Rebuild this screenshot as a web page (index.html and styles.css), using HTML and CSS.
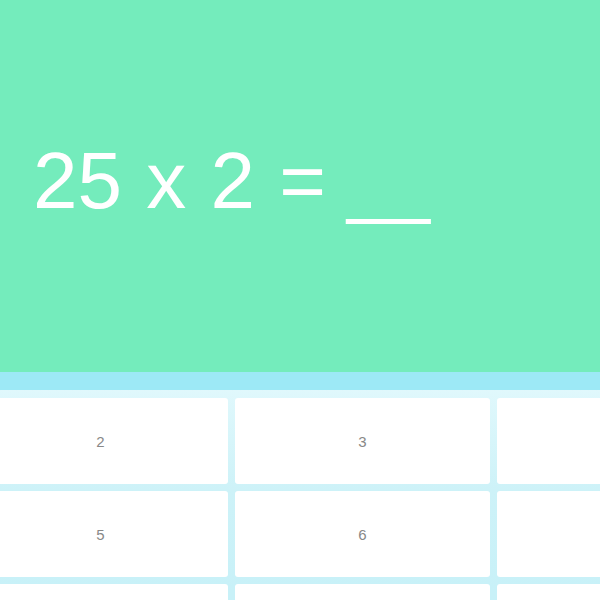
FILE: index.html
```html
<!DOCTYPE html>
<html lang="en">
<head>
<meta charset="utf-8">
<title>Multiplication</title>
<link rel="stylesheet" href="styles.css">
</head>
<body>
<div class="app">
  <header class="question">
    <div class="equation">25 x 2 = <span class="blank">__</span></div>
  </header>
  <div class="strip"></div>
  <div class="pad">
    <div class="keys">
      <button class="key">2</button>
      <button class="key">3</button>
      <button class="key">4</button>
      <button class="key">5</button>
      <button class="key">6</button>
      <button class="key">7</button>
      <button class="key">8</button>
      <button class="key">9</button>
      <button class="key">10</button>
    </div>
  </div>
</div>
</body>
</html>
```
FILE: styles.css
```css
html, body {
  margin: 0;
  padding: 0;
  width: 600px;
  height: 600px;
  overflow: hidden;
  background: #ffffff;
}
.app {
  display: flex;
  flex-direction: column;
  width: 600px;
  height: 600px;
  overflow: hidden;
}
.question {
  height: 372px;
  flex: none;
  background: #74ecbc;
  display: flex;
  align-items: center;
  padding: 0 0 10px 33px;
  box-sizing: border-box;
}
.equation {
  font-family: "Liberation Sans", Arial, sans-serif;
  font-size: 80px;
  color: #ffffff;
  white-space: nowrap;
  word-spacing: 2px;
}
.blank {
  letter-spacing: -6px;
  margin-left: -3px;
}
.strip {
  height: 18px;
  flex: none;
  background: #9de9f6;
}
.pad {
  flex: 1;
  background: linear-gradient(to bottom, #e0f8fc 0px, #cdf2f8 100px, #c8f1f8 200px);
  overflow: hidden;
}
.keys {
  display: grid;
  grid-template-columns: repeat(3, 255px);
  grid-auto-rows: 86px;
  gap: 7px;
  padding-top: 8px;
  margin-left: -27px;
}
.key {
  border: none;
  background: #ffffff;
  border-radius: 3px;
  font-family: "Liberation Sans", Arial, sans-serif;
  font-size: 15px;
  color: #888888;
  padding: 0;
  margin: 0;
}
```
